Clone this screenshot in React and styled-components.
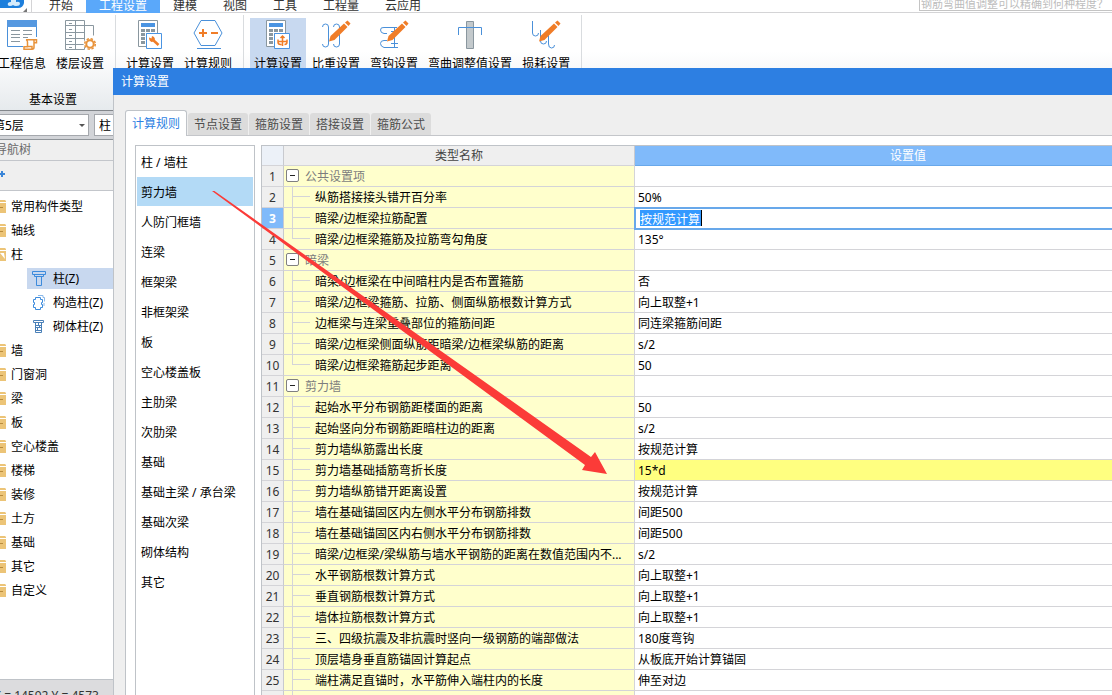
import styled, { createGlobalStyle, css } from "styled-components";

const GlobalStyle = createGlobalStyle`
  * {
    box-sizing: border-box;
  }
  body {
    margin: 0;
    overflow: hidden;
  }
  body, button, input, select {
    font-family: "Noto Sans", "Noto Sans CJK SC", sans-serif;
    font-size: 12px;
    line-height: 18px;
    color: #000;
  }
  button {
    border: 0;
    padding: 0;
    background: none;
    text-align: left;
    white-space: nowrap;
  }
`;

const Shell = styled.div`
  position: relative;
  height: 100vh;
  overflow: hidden;
  display: flex;
  flex-direction: column;
  background: #fff;
`;

const MenuBar = styled.div`
  flex: none;
  height: 13px;
  margin-right: -70px;
  display: flex;
  align-items: flex-end;
  border-bottom: 1px solid #d4d4d6;
`;

const Logo = styled.div`
  flex: none;
  width: 32px;
  height: 12px;
  margin-right: 4px;
  border-right: 1px solid #d4d4d6;

  svg {
    display: block;
  }
`;

const Menu = styled.nav`
  flex: 1;
  display: flex;
  margin-bottom: -1px;
`;

const MenuTab = styled.button`
  height: 18px;
  padding: 2px 13px 0;
  color: ${(props) => (props.$active ? "#fff" : "#333")};
  background: ${(props) => (props.$active ? "#5aa8fa" : "transparent")};
`;

const Search = styled.input`
  width: 263px;
  height: 18px;
  margin-bottom: 1px;
  padding: 2px 1px 0;
  border: 1px solid #c4c4c4;
  font-size: 11px;
  line-height: 14px;

  &::placeholder {
    color: #bcbcbc;
  }
`;

const Ribbon = styled.div`
  flex: none;
  height: 98px;
  margin-left: -12px;
  display: flex;
  background: linear-gradient(#fff 40%, #e6eaed);
  border-bottom: 1px solid #83878c;
`;

const RibbonGroup = styled.section`
  display: flex;
  flex-direction: column;
  justify-content: space-between;
  margin-top: 2px;
  padding: 3px 7px 1px 6px;
  border-right: 1px solid #d9dcdf;
`;

const RibbonButtons = styled.div`
  display: flex;
  gap: 2px;
`;

const RibbonButton = styled.button`
  display: flex;
  flex-direction: column;
  align-items: center;
  gap: 3px;
  padding: 2px 4px;
  background: ${(props) => (props.$active ? "#c8d9f0" : "transparent")};
`;

const GroupTitle = styled.div`
  padding-left: 4px;
  text-align: center;
`;

const Sidebar = styled.aside`
  flex: 1;
  min-height: 0;
  width: 113px;
  display: flex;
  flex-direction: column;
  overflow: hidden;
`;

const FloorBar = styled.div`
  flex: none;
  display: flex;
  gap: 5px;
  margin-left: -12px;
  padding: 3px 0;
  background: #d2d4d8;
  border-bottom: 1px solid #8f9499;
`;

const SelectBox = styled.label`
  flex: none;
  position: relative;
  width: 101px;

  select {
    display: block;
    width: 100%;
    height: 22px;
    padding: 2px 4px 0;
    appearance: none;
    border: 1px solid #a5a8ad;
    border-radius: 0;
    background: #fff;
  }
  svg {
    position: absolute;
    right: 4px;
    top: 10px;
  }
`;

const NavTitle = styled.div`
  flex: none;
  height: 21px;
  margin-left: -5px;
  line-height: 20px;
  color: #6a6a6a;
  background: #efefef;
  border-bottom: 1px solid #c3c6cb;
`;

const NavTools = styled.div`
  flex: none;
  height: 30px;
  display: flex;
  align-items: center;
  background: #efefef;
  border-bottom: 1px solid #c3c6cb;

  button {
    height: 12px;
    margin-top: -4px;
  }
  svg {
    display: block;
  }
`;

const Tree = styled.ul`
  flex: 1;
  min-height: 0;
  margin: 0;
  padding: 4px 0 0;
  list-style: none;
`;

const TreeItem = styled.li`
  height: 24px;

  button {
    width: 100%;
    height: 24px;
    display: flex;
    align-items: center;
    gap: 5px;
  }
`;

const TreeChild = styled.li`
  height: 24px;
  padding: 1px 0 2px 27px;

  button {
    width: 100%;
    height: 21px;
    display: flex;
    align-items: center;
    gap: 6px;
    padding-left: 4px;
    background: ${(props) => (props.$active ? "#c8d8ef" : "transparent")};
  }
`;

const StatusBar = styled.footer`
  flex: none;
  height: 16px;
  overflow: hidden;
  margin-left: -6px;
  line-height: 32px;
  white-space: nowrap;
  color: #333;
  background: #dcdcde;
  border-top: 1px solid #bfc3c8;
`;

const Dialog = styled.div`
  position: absolute;
  left: 113px;
  right: -70px;
  top: 68px;
  bottom: 0;
  display: flex;
  flex-direction: column;
  overflow: hidden;
  background: #efefef;
`;

const DialogTitle = styled.header`
  flex: none;
  height: 27px;
  padding-left: 8px;
  line-height: 28px;
  color: #fff;
  background: #2d7fe2;
`;

const DialogBody = styled.div`
  flex: 1;
  min-height: 0;
  display: flex;
  flex-direction: column;
  padding: 15px 0 0 11px;
  border-left: 1px solid #bfc3c8;
`;

const Tabs = styled.div`
  flex: none;
  display: flex;
  align-items: flex-end;
  gap: 1px;
  border-bottom: 1px solid #c4c6ca;
`;

const Tab = styled.button`
  height: 22px;
  padding: 2px 6px 0;
  border-radius: 3px 3px 0 0;
  color: #4c4c4c;
  background: #dcdcdc;

  ${(props) =>
    props.$active &&
    css`
      height: 26px;
      margin-bottom: -1px;
      padding: 0 6px;
      border: 1px solid #bfc3c8;
      border-bottom: 0;
      color: #2d7fe2;
      background: #fff;
    `}
`;

const Panel = styled.div`
  flex: 1;
  min-height: 0;
  display: flex;
  gap: 6px;
  padding: 9px 0 0 9px;
  border-left: 1px solid #bfc3c8;
  background: #fff;
`;

const TypeList = styled.ul`
  flex: none;
  width: 120px;
  margin: 0;
  padding: 1px;
  list-style: none;
  border: 1px solid #bfc3c8;
  border-bottom: 0;
`;

const TypeItem = styled.li`
  height: 30px;

  button {
    width: 100%;
    height: 29px;
    padding: 3px 4px 0;
    background: ${(props) => (props.$active ? "#b3daf6" : "transparent")};
  }
`;

const GridBox = styled.div`
  flex: 1;
  min-width: 0;
  overflow: hidden;
  border: 1px solid #bfc3c8;
  border-width: 1px 0 0 1px;
`;

const Grid = styled.table`
  width: 100%;
  table-layout: fixed;
  border-collapse: separate;
  border-spacing: 0;
`;

const HeadCell = styled.th`
  width: ${(props) => props.$width};
  height: 20px;
  padding: 1px 0 0;
  font-weight: 400;
  color: ${(props) => (props.$active ? "#fff" : "#444")};
  background: ${(props) => (props.$active ? "#80bafa" : "#efefef")};
  border-bottom: 1px solid ${(props) => (props.$active ? "#68a8ea" : "#d4d4d8")};
  border-right: 1px solid #c8cacf;

  &:first-child {
    background: #ecf1f8;
  }
`;

const RowNumber = styled.th`
  height: 21px;
  padding: 2px 0 0;
  font-weight: ${(props) => (props.$active ? 700 : 400)};
  color: ${(props) => (props.$active ? "#fff" : "#333")};
  background: ${(props) => (props.$active ? "#80bafa" : "#efefef")};
  border-bottom: 1px solid #d4d4d8;
  border-right: 1px solid #c8cacf;
`;

const NameCell = styled.td`
  height: 21px;
  padding: 0;
  background: #ffffcc;
  border-bottom: 1px solid #d4d4d8;
  border-right: 1px solid #d4d4d8;
`;

const NameLine = styled.div`
  display: flex;
  align-items: flex-start;
  height: 20px;
  padding-left: ${(props) => (props.$group ? "2px" : "8px")};
  gap: ${(props) => (props.$group ? "6px" : "5px")};
  color: ${(props) => (props.$group ? "#7d7d7d" : "#000")};
  white-space: nowrap;
`;

const NameText = styled.span`
  padding-top: 2px;
`;

// branch connector in front of a child row
const Branch = styled.span`
  flex: none;
  align-self: stretch;
  width: 18px;
  display: grid;
  grid-template-rows: 10px 1fr;
  margin-bottom: -1px;

  &::before,
  &::after {
    content: "";
    border-left: 1px solid #d4d4d8;
  }
  &::before {
    border-bottom: 1px solid #d4d4d8;
  }
  &::after {
    border-left-width: ${(props) => (props.$last ? "0" : "1px")};
  }
`;

const Toggle = styled.button`
  flex: none;
  width: 13px;
  height: 13px;
  margin-top: 3px;
  display: flex;
  align-items: center;
  justify-content: center;
  border: 1px solid #808080;
  border-radius: 2px;
  background: #fff;

  &::before {
    content: "";
    width: 5px;
    height: 1px;
    background: #222;
  }
`;

const ValueCell = styled.td`
  height: 21px;
  padding: 2px 3px 0;
  background: ${(props) => (props.$marked ? "#ffff80" : "#fff")};
  border-bottom: 1px solid #d4d4d8;

  ${(props) =>
    props.$editing &&
    css`
      padding: 0 5px;
      outline: 2px solid #68a8ea;
      outline-offset: -1px;
    `}
`;

const Editor = styled.input`
  display: block;
  width: 62px;
  height: 16px;
  padding: 1px 0 0;
  border: 0;
  border-right: 1px solid #000;
  outline: 0;
  line-height: 15px;
  color: #fff;
  background: #3399ff;
`;

const Pointer = styled.svg`
  position: absolute;
  left: 212px;
  top: 191px;
  pointer-events: none;
`;

const BLUE = "#4a90d9";
const GREY = "#8a979f";
const ORANGE = "#f07d28";

const Icon = ({ children }) => (
  <svg width="32" height="32" viewBox="0 0 32 32" fill="none" aria-hidden="true">
    {children}
  </svg>
);

const InfoIcon = () => (
  <Icon>
    <path d="M1.500 3v23.500H17M30.500 3v14" stroke={BLUE} />
    <path d="M1 0h30v7H1z" fill="#5598e0" />
    <path d="M5 10.500h9M17 10.500h9M5 14.500h9M17 14.500h9M5 17.500h9M17 17.500h5M5 21.500h9" stroke={GREY} />
    <path d="M20 19.700h10.500v3H28v4.500q0 2-2 2h-8v-2.500h3.500V22q0-2-1.500-2.300zM28 20v3M21.500 26.500H26v2.500" stroke="#e8923a" strokeWidth="1.500" />
  </Icon>
);

const FloorIcon = () => (
  <Icon>
    <path d="M1.500.5h19v29h-19zM11.500.5v29M1.500 5.500h19M1.500 12.500h19M1.500 18.500h19M1.500 24.500h19" stroke={GREY} />
    <path d="M5 3.500h3M5 9.500h3M5 15.500h3M5 21.500h3M5 27.500h3M20.500 5.500h9v10" stroke={GREY} />
    <circle cx="26" cy="24" r="6.500" fill="#fff" />
    <circle cx="26" cy="24" r="3.700" stroke="#e8923a" strokeWidth="2" />
    <circle cx="26" cy="24" r="5.300" stroke="#e8923a" strokeWidth="1.500" strokeDasharray="2.400 1.760" />
  </Icon>
);

const Calculator = ({ children }) => (
  <Icon>
    <path d="M4.500.5h19v26h-19z" fill="#fff" stroke={GREY} />
    <path d="M7 3h14v4H7z" fill="#4a94e2" />
    <path d="M7 10.500h14M7 14.500h14M7 18.500h14M7 22.500h14" stroke={GREY} strokeWidth="3" strokeDasharray="4 1" />
    <path d="M12.500 13.500h15v15h-15z" fill="#fff" stroke="#4a94e2" />
    {children}
  </Icon>
);

const CalcToolIcon = () => (
  <Calculator>
    <path d="M18 19l6.500 6" stroke={ORANGE} strokeWidth="2.500" />
    <path d="M15 17.500l2.500 1 .5-2.500q2.500.5 3 3-1 3-3.500 3-2.500-1-2.500-4.500z" fill={ORANGE} />
  </Calculator>
);

const CalcCurveIcon = () => (
  <Calculator>
    <path d="M20.500 26v-9.500M18.500 18l2-2 2 2M15.500 21.500H25M16 19.500v2.500q0 2.500 2.500 2.500h1M25 19.500v2.500q0 2.500-2.500 2.500" stroke={ORANGE} strokeWidth="1.500" />
  </Calculator>
);

const RuleIcon = () => (
  <Icon>
    <path d="M9 .5h14l7 12.500-7 12.500H9L2 13z" stroke={BLUE} />
    <path d="M7 13h8M11 9v8M19 13h7" stroke={ORANGE} strokeWidth="2" />
    <path d="M5 28.500h24" stroke={BLUE} />
  </Icon>
);

const Pencil = () => (
  <>
    <path d="M9 21.500l1.500-5.500L24 3.500l3.500 3.500L14.500 20z" fill={ORANGE} />
    <path d="M25 2.500L27.500.5 30.500 3.500l-2 2.500z" fill={ORANGE} />
  </>
);

const WeightIcon = () => (
  <Icon>
    <path d="M2.500 7q0-3 3-3t3 3v17q0 3-3 3t-3-3M13.500 7q0-3 3-3t3 3v17q0 3-3 3t-3-3" stroke={BLUE} />
    <Pencil />
  </Icon>
);

const HookIcon = () => (
  <Icon>
    <path d="M9 13.500H6q-3.500-.5-3.500-3.500T6 7.500h13M9 20.500H6q-3.500 0-3.500 3T6 27.500h14M16.500 7.500v20M13 11.500h7M13 23.500h7" stroke={BLUE} />
    <Pencil />
  </Icon>
);

const BendIcon = () => (
  <Icon>
    <path d="M12.500 1.500h7v27h-7z" fill="#c3c9cc" stroke={GREY} />
    <path d="M4.500 15V7.500h23V15" stroke={BLUE} />
  </Icon>
);

const LossIcon = () => (
  <Icon>
    <path d="M2.500 1v12q0 3 3 3t3-3M10.500 10v11q0 3 3 3t3-3M18.500 14v10q0 4 3 4t3-3" stroke={BLUE} />
    <Pencil />
  </Icon>
);

const FolderIcon = ({ open }) => (
  <svg width="6" height="14" viewBox="0 0 6 14" aria-hidden="true">
    <path d="M0 0h5l1 1v12H0z" fill="#ecc477" />
    <path d="M0 2.500h6" stroke="#fff" />
    {open ? <path d="M0 5l4 0 1 6z" fill="#fff" /> : <path d="M0 7.500h3" stroke="#b98b3c" />}
  </svg>
);

const ColumnIcon = () => (
  <svg width="16" height="16" viewBox="0 0 16 16" fill="none" stroke="#3d8bdc" aria-hidden="true">
    <path d="M1.500.5h13v3h-13zM3.500 3.500v2h9v-2M5.500 5.500h5v9h-5z" />
  </svg>
);

const TieColumnIcon = () => (
  <svg width="16" height="16" viewBox="0 0 16 16" fill="none" stroke="#3d8bdc" aria-hidden="true">
    <path d="M4.500 2.500h5v2h2v3h-1v2h1v3h-2v2h-5v-2h-2v-3h1v-2h-1v-3h2z" />
    <path d="M7 .5h5v2h1.500v4M13 8v3" stroke="#8ab9ea" />
  </svg>
);

const MasonryIcon = () => (
  <svg width="16" height="16" viewBox="0 0 16 16" fill="none" stroke="#4a80b8" aria-hidden="true">
    <path d="M2.500 1.500h10v2h-10zM4.500 3.500h6v10h-6zM4.500 6.500h6M4.500 8.500h6M4.500 11.500h6M7.500 4v2.500M6.500 9v2M8.500 7v1.500" />
  </svg>
);

const menus = ["开始", "工程设置", "建模", "视图", "工具", "工程量", "云应用"];

const ribbon = [
  {
    title: "基本设置",
    items: [
      { label: "工程信息", icon: InfoIcon },
      { label: "楼层设置", icon: FloorIcon },
    ],
  },
  {
    items: [
      { label: "计算设置", icon: CalcToolIcon },
      { label: "计算规则", icon: RuleIcon },
    ],
  },
  {
    items: [
      { label: "计算设置", icon: CalcCurveIcon, active: true },
      { label: "比重设置", icon: WeightIcon },
      { label: "弯钩设置", icon: HookIcon },
      { label: "弯曲调整值设置", icon: BendIcon },
      { label: "损耗设置", icon: LossIcon },
    ],
  },
];

const tree = [
  { label: "常用构件类型" },
  { label: "轴线" },
  {
    label: "柱",
    children: [
      { label: "柱(Z)", icon: ColumnIcon, active: true },
      { label: "构造柱(Z)", icon: TieColumnIcon },
      { label: "砌体柱(Z)", icon: MasonryIcon },
    ],
  },
  { label: "墙" },
  { label: "门窗洞" },
  { label: "梁" },
  { label: "板" },
  { label: "空心楼盖" },
  { label: "楼梯" },
  { label: "装修" },
  { label: "土方" },
  { label: "基础" },
  { label: "其它" },
  { label: "自定义" },
];

const tabs = ["计算规则", "节点设置", "箍筋设置", "搭接设置", "箍筋公式"];

const types = [
  "柱 / 墙柱",
  "剪力墙",
  "人防门框墙",
  "连梁",
  "框架梁",
  "非框架梁",
  "板",
  "空心楼盖板",
  "主肋梁",
  "次肋梁",
  "基础",
  "基础主梁 / 承台梁",
  "基础次梁",
  "砌体结构",
  "其它",
];

const rows = [
  { name: "公共设置项", group: true },
  { name: "纵筋搭接接头错开百分率", value: "50%" },
  { name: "暗梁/边框梁拉筋配置", value: "按规范计算", editing: true },
  { name: "暗梁/边框梁箍筋及拉筋弯勾角度", value: "135°" },
  { name: "暗梁", group: true },
  { name: "暗梁/边框梁在中间暗柱内是否布置箍筋", value: "否" },
  { name: "暗梁/边框梁箍筋、拉筋、侧面纵筋根数计算方式", value: "向上取整+1" },
  { name: "边框梁与连梁重叠部位的箍筋间距", value: "同连梁箍筋间距" },
  { name: "暗梁/边框梁侧面纵筋距暗梁/边框梁纵筋的距离", value: "s/2" },
  { name: "暗梁/边框梁箍筋起步距离", value: "50" },
  { name: "剪力墙", group: true },
  { name: "起始水平分布钢筋距楼面的距离", value: "50" },
  { name: "起始竖向分布钢筋距暗柱边的距离", value: "s/2" },
  { name: "剪力墙纵筋露出长度", value: "按规范计算" },
  { name: "剪力墙基础插筋弯折长度", value: "15*d", marked: true },
  { name: "剪力墙纵筋错开距离设置", value: "按规范计算" },
  { name: "墙在基础锚固区内左侧水平分布钢筋排数", value: "间距500" },
  { name: "墙在基础锚固区内右侧水平分布钢筋排数", value: "间距500" },
  { name: "暗梁/边框梁/梁纵筋与墙水平钢筋的距离在数值范围内不...", value: "s/2" },
  { name: "水平钢筋根数计算方式", value: "向上取整+1" },
  { name: "垂直钢筋根数计算方式", value: "向上取整+1" },
  { name: "墙体拉筋根数计算方式", value: "向上取整+1" },
  { name: "三、四级抗震及非抗震时竖向一级钢筋的端部做法", value: "180度弯钩" },
  { name: "顶层墙身垂直筋锚固计算起点", value: "从板底开始计算锚固" },
  { name: "端柱满足直锚时，水平筋伸入端柱内的长度", value: "伸至对边" },
  { name: "", value: "" },
];

const NavTree = () => (
  <Tree>
    {tree.map((node) => [
      <TreeItem key={node.label}>
        <button type="button">
          <FolderIcon open={Boolean(node.children)} />
          {node.label}
        </button>
      </TreeItem>,
      ...(node.children || []).map((child) => (
        <TreeChild key={child.label} $active={child.active}>
          <button type="button">
            <child.icon />
            {child.label}
          </button>
        </TreeChild>
      )),
    ])}
  </Tree>
);

const SettingsGrid = () => (
  <Grid>
    <thead>
      <tr>
        <HeadCell $width="22px" />
        <HeadCell $width="351px">类型名称</HeadCell>
        <HeadCell $active>设置值</HeadCell>
      </tr>
    </thead>
    <tbody>
      {rows.map((row, index) => (
        <tr key={index}>
          <RowNumber $active={row.editing} scope="row">
            {row.name && index + 1}
          </RowNumber>
          <NameCell>
            <NameLine $group={row.group}>
              {row.group ? (
                <Toggle type="button" aria-label={`折叠${row.name}`} />
              ) : (
                <Branch $last={rows[index + 1]?.group} />
              )}
              <NameText>{row.name}</NameText>
            </NameLine>
          </NameCell>
          <ValueCell $editing={row.editing} $marked={row.marked}>
            {row.editing ? <Editor aria-label={row.name} defaultValue={row.value} /> : row.value}
          </ValueCell>
        </tr>
      ))}
    </tbody>
  </Grid>
);

const App = () => {
  return (
    <Shell>
      <GlobalStyle />
      <MenuBar>
        <Logo>
          <svg width="30" height="12" viewBox="0 0 30 12" aria-hidden="true">
            <path d="M0 0h24v3q-1 5-6 5H0z" fill="#1d7fdc" />
            <path d="M11 0h5v2q4-1 4 1.500T16 6q-2 0-3-1-1 1-3 1-3 0-2-3 1-1 3-1z" fill="#d5ebfb" />
            <path d="M27 8v4h-4z" fill="#777" />
          </svg>
        </Logo>
        <Menu>
          {menus.map((menu) => (
            <MenuTab key={menu} type="button" $active={menu === "工程设置"}>
              {menu}
            </MenuTab>
          ))}
        </Menu>
        <Search aria-label="搜索" placeholder="钢筋弯曲值调整可以精确到何种程度？" />
      </MenuBar>

      <Ribbon>
        {ribbon.map((group, index) => (
          <RibbonGroup key={index}>
            <RibbonButtons>
              {group.items.map((item) => (
                <RibbonButton key={item.label} type="button" $active={item.active}>
                  <item.icon />
                  {item.label}
                </RibbonButton>
              ))}
            </RibbonButtons>
            {group.title && <GroupTitle>{group.title}</GroupTitle>}
          </RibbonGroup>
        ))}
      </Ribbon>

      <Sidebar>
        <FloorBar>
          <SelectBox>
            <select aria-label="楼层">
              <option>第5层</option>
            </select>
            <svg width="6" height="4" aria-hidden="true">
              <path d="M0 0h6L3 3z" fill="#555" />
            </svg>
          </SelectBox>
          <SelectBox>
            <select aria-label="构件">
              <option>柱</option>
            </select>
          </SelectBox>
        </FloorBar>
        <NavTitle>导航树</NavTitle>
        <NavTools>
          <button type="button" aria-label="新建">
            <svg width="6" height="12" viewBox="0 0 6 12" aria-hidden="true">
              <path d="M0 6h5M2 3v6" stroke="#3a86d8" strokeWidth="2" />
            </svg>
          </button>
        </NavTools>
        <NavTree />
        <StatusBar>X = 14592 Y = 4573</StatusBar>
      </Sidebar>

      <Dialog role="dialog" aria-label="计算设置">
        <DialogTitle>计算设置</DialogTitle>
        <DialogBody>
          <Tabs role="tablist">
            {tabs.map((tab, index) => (
              <Tab key={tab} type="button" role="tab" aria-selected={index === 0} $active={index === 0}>
                {tab}
              </Tab>
            ))}
          </Tabs>
          <Panel>
            <TypeList>
              {types.map((type) => (
                <TypeItem key={type} $active={type === "剪力墙"}>
                  <button type="button">{type}</button>
                </TypeItem>
              ))}
            </TypeList>
            <GridBox>
              <SettingsGrid />
            </GridBox>
          </Panel>
        </DialogBody>
      </Dialog>

      <Pointer width="395" height="284" viewBox="0 0 395 284" aria-hidden="true">
        <path d="M0 0l1-1 378 267 4-5 12 22-25-4 3-5z" fill="#fb3b38" />
      </Pointer>
    </Shell>
  );
};

export default App;
